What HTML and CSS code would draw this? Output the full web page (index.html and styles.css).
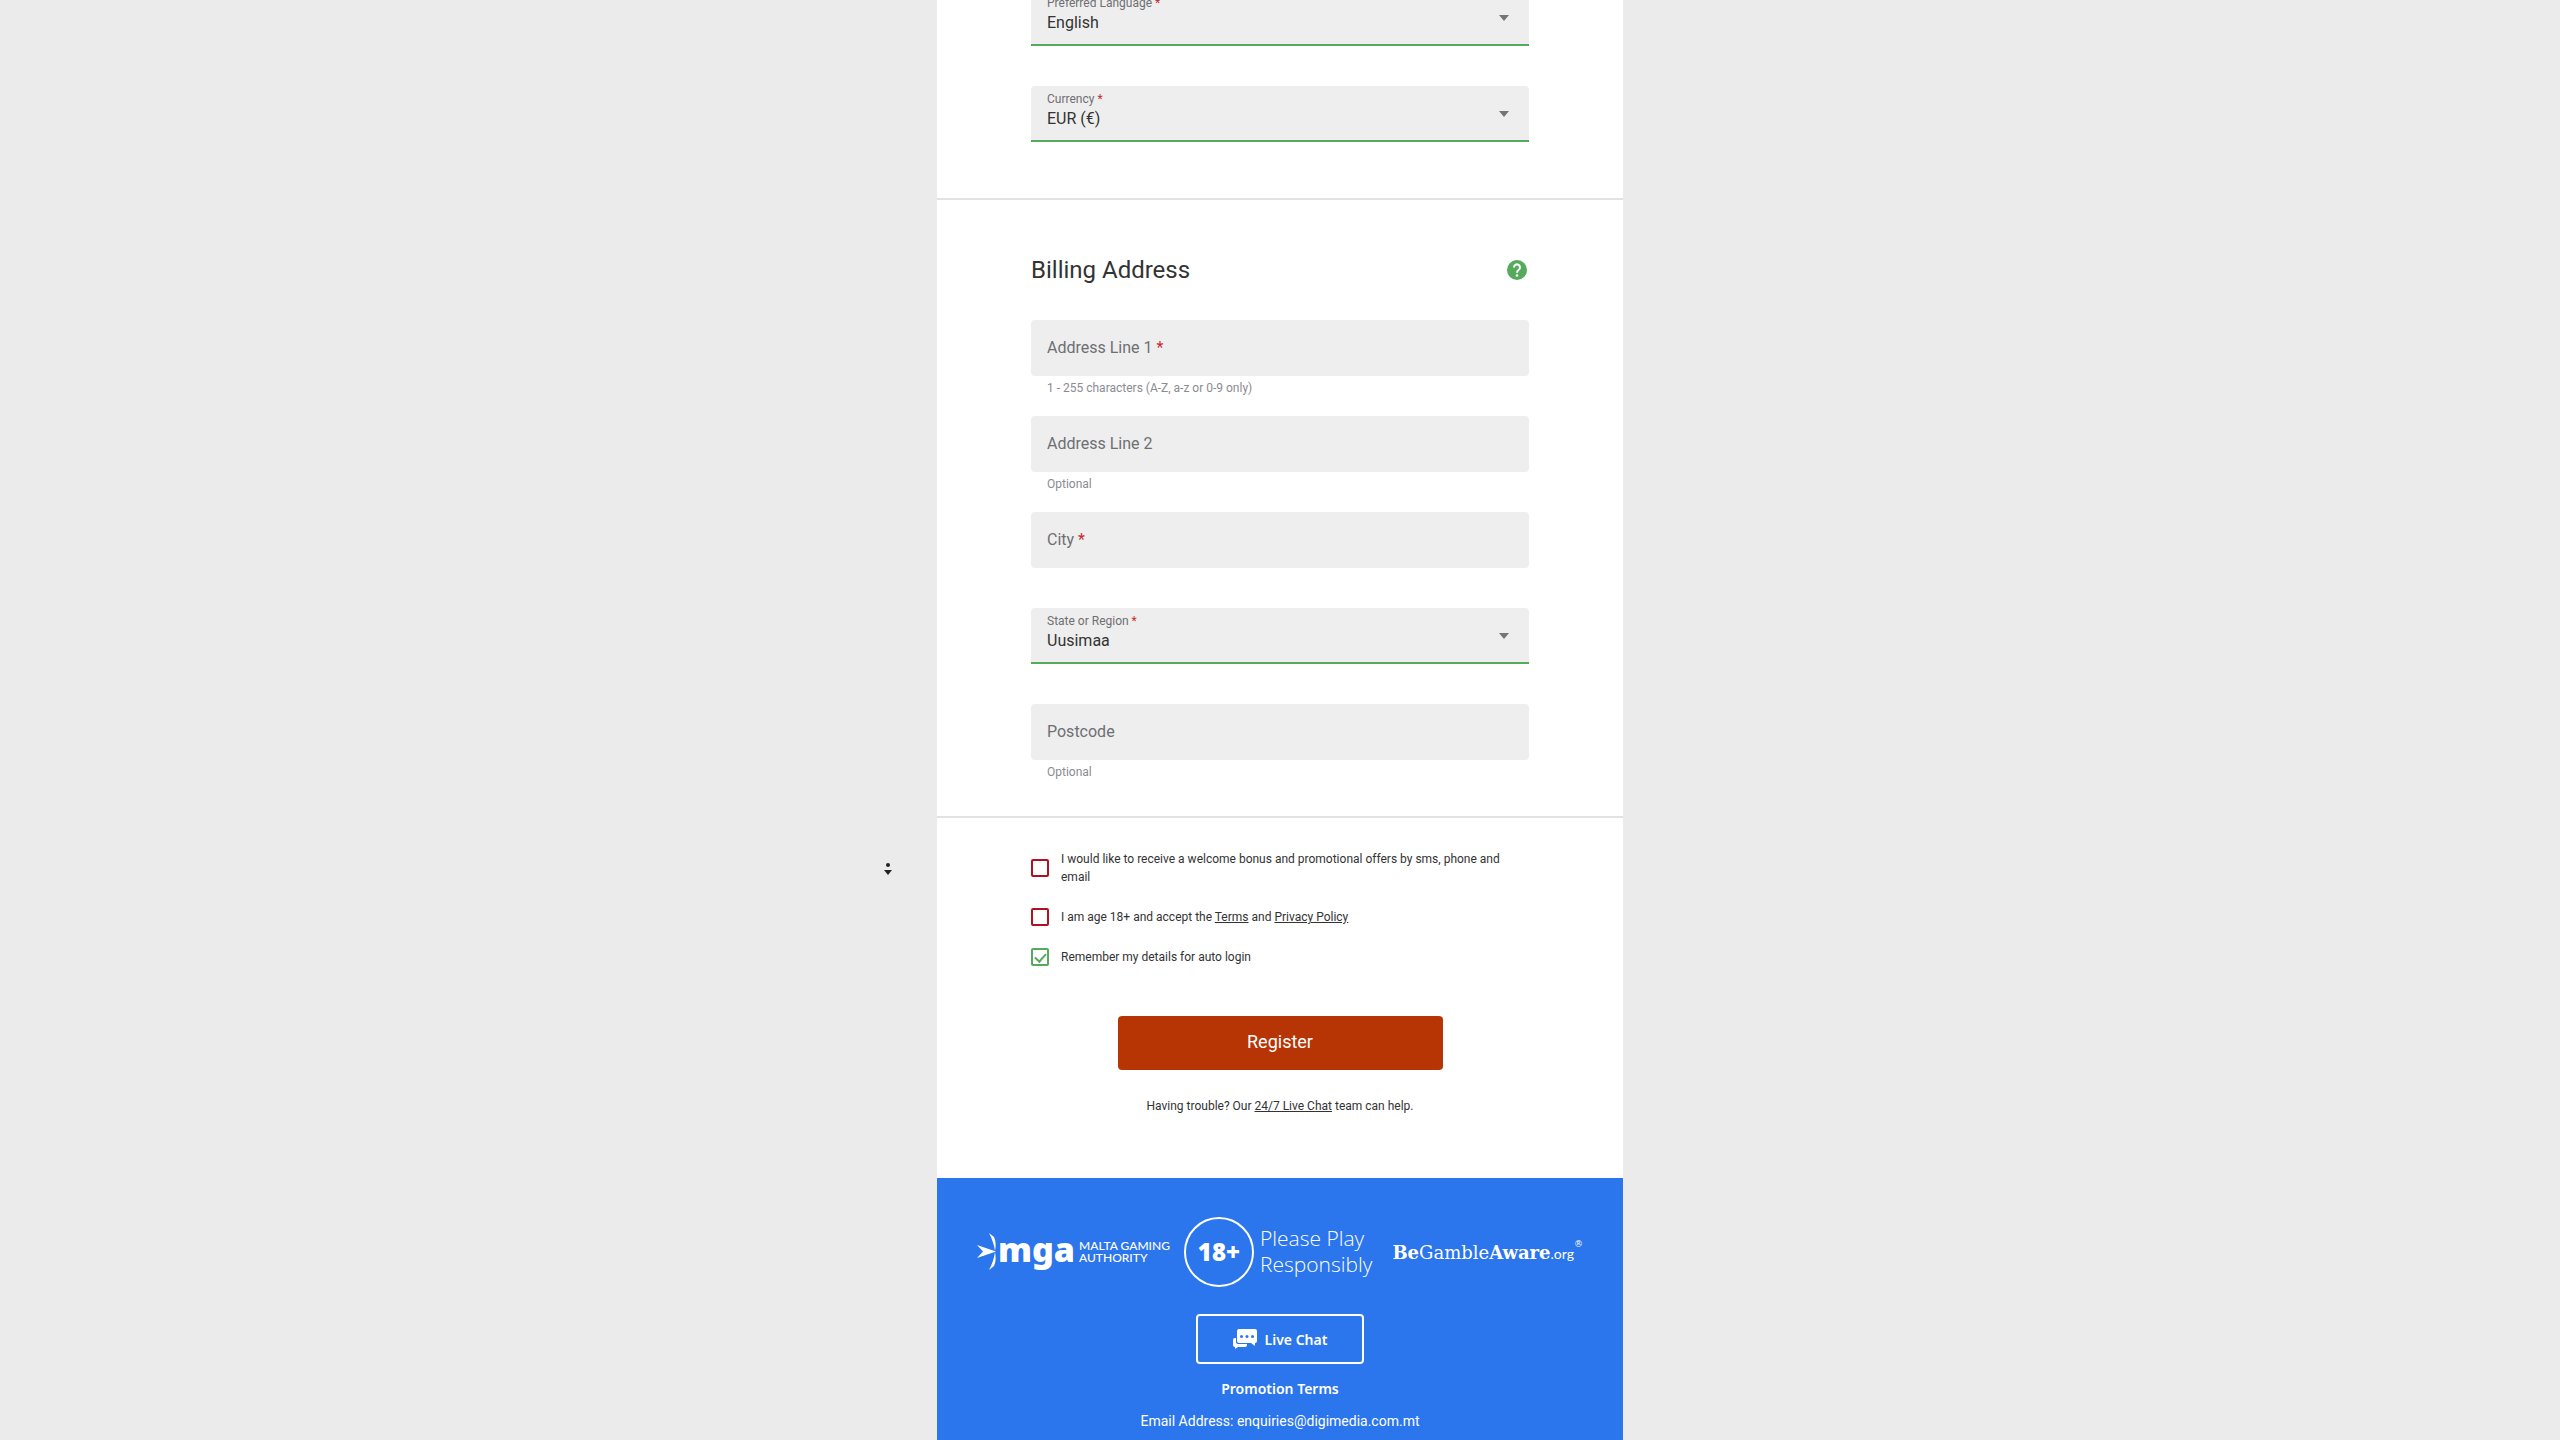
FILE: index.html
```html
<!DOCTYPE html>
<html lang="en">
<head>
  <meta charset="UTF-8" />
  <meta name="viewport" content="width=device-width, initial-scale=1" />
  <title>Register</title>
  <link rel="stylesheet" href="styles.css">
</head>
<body>
  <main class="card">
    <form class="form">
      <section class="section section-account">
        <div class="field field-select">
          <div class="box">
            <label for="language">Preferred Language <span class="req">*</span></label>
            <select id="language"><option>English</option></select>
          </div>
        </div>
        <div class="field field-select">
          <div class="box">
            <label for="currency">Currency <span class="req">*</span></label>
            <select id="currency"><option>EUR (€)</option></select>
          </div>
        </div>
      </section>

      <section class="section section-address">
        <div class="section-head">
          <h2>Billing Address</h2>
          <button type="button" class="help" aria-label="Help">
            <svg viewBox="2 2 20 20" width="20" height="20"><circle cx="12" cy="12" r="10" fill="#55aa5c"/><path d="M9 9.500a3 3 0 1 1 4.800 2.300c-1.200.9-1.800 1.400-1.800 2.900" fill="none" stroke="#fff" stroke-width="2"/><circle cx="12" cy="17.500" r="1.300" fill="#fff"/></svg>
          </button>
        </div>
        <div class="field">
          <div class="box">
            <label for="address1">Address Line 1 <span class="req">*</span></label>
            <input type="text" id="address1" />
          </div>
          <p class="hint">1 - 255 characters (A-Z, a-z or 0-9 only)</p>
        </div>
        <div class="field">
          <div class="box">
            <label for="address2">Address Line 2</label>
            <input type="text" id="address2" />
          </div>
          <p class="hint">Optional</p>
        </div>
        <div class="field">
          <div class="box">
            <label for="city">City <span class="req">*</span></label>
            <input type="text" id="city" />
          </div>
        </div>
        <div class="field field-select">
          <div class="box">
            <label for="region">State or Region <span class="req">*</span></label>
            <select id="region"><option>Uusimaa</option></select>
          </div>
        </div>
        <div class="field">
          <div class="box">
            <label for="postcode">Postcode</label>
            <input type="text" id="postcode" />
          </div>
          <p class="hint">Optional</p>
        </div>
      </section>

      <section class="section section-submit">
        <div class="check">
          <input type="checkbox" id="offers" />
          <label for="offers">I would like to receive a welcome bonus and promotional offers by sms, phone and email</label>
        </div>
        <div class="check">
          <input type="checkbox" id="age" />
          <label for="age">I am age 18+ and accept the <a href="#">Terms</a> and <a href="#">Privacy Policy</a></label>
        </div>
        <div class="check">
          <input type="checkbox" id="remember" checked />
          <label for="remember">Remember my details for auto login</label>
        </div>
        <button type="submit" class="register">Register</button>
        <p class="trouble">Having trouble? Our <a href="#">24/7 Live Chat</a> team can help.</p>
      </section>
    </form>

    <footer class="footer">
      <div class="logos">
        <a href="#" class="mga">
          <svg viewBox="0 0 20 38" width="20" height="38" fill="#fff"><path d="M0 12l19 6.500L0 25l6-6.500z"/><path d="M12 0l5 4c2 4 2 9 1 14C17 11 15 6 12 0zM12 37l5-4c2-4 2-9 1-14-1 7-3 12-6 18z"/></svg>
          <span class="mga-name">mga</span>
          <span class="mga-text">MALTA GAMING<br>AUTHORITY</span>
        </a>
        <div class="adult">
          <span class="adult-badge">18+</span>
          <span class="adult-text">Please Play<br>Responsibly</span>
        </div>
        <a href="#" class="aware"><b>Be</b>Gamble<b>Aware</b><small>.org</small><sup>®</sup></a>
      </div>
      <button type="button" class="live-chat">
        <svg viewBox="0 0 24 20" width="24" height="20"><path fill="#fff" d="M6 0h16a2 2 0 0 1 2 2v10a2 2 0 0 1-2 2v3l-4-3H6a2 2 0 0 1-2-2V2a2 2 0 0 1 2-2z"/><path fill="#fff" d="M2 9h1v4a2 2 0 0 0 2 2h9v1a2 2 0 0 1-2 2H5l-3 2v-2a2 2 0 0 1-2-2v-5a2 2 0 0 1 2-2z"/><g fill="#2b75ed"><circle cx="8.500" cy="7.500" r="1.500"/><circle cx="14" cy="7.500" r="1.500"/><circle cx="19.500" cy="7.500" r="1.500"/></g></svg>
        Live Chat
      </button>
      <a href="#" class="promo">Promotion Terms</a>
      <p class="email">Email Address: enquiries@digimedia.com.mt</p>
    </footer>
  </main>
  <svg class="scroll-mark" viewBox="0 0 8 12" width="8" height="12"><circle cx="4" cy="2" r="2"/><path d="M0 7h8l-4 5z"/></svg>
</body>
</html>
```

FILE: styles.css
```css
:root {
  --green: #55aa5c;
  --red: #b11021;
  --blue: #2b75ed;
  --field: #eee;
  --text: #333;
  --muted: #6e6e73;
}
* { box-sizing: border-box; margin: 0; padding: 0; }
body {
  font-family: Roboto, sans-serif;
  font-size: 12px;
  line-height: 18px;
  background: #ebebeb;
  color: var(--text);
  display: flex;
  justify-content: center;
  min-height: 100vh;
}
a { color: inherit; }
button, input, select { font-family: inherit; }
.card {
  width: 100%;
  max-width: 686px;
  background: #fff;
  display: flex;
  flex-direction: column;
}
/* page is scrolled a little past the first field */
.form { margin-top: -10px; }
.section { padding: 0 94px; }
.section-account,
.section-address { border-bottom: 2px solid #e3e3e3; }
.section-account { padding-bottom: 16px; }
.section-address { padding-top: 52px; padding-bottom: 16px; }

.section-head {
  display: flex;
  align-items: center;
  justify-content: space-between;
  height: 36px;
  margin-bottom: 32px;
  padding-right: 2px;
}
h2 { font-size: 24px; font-weight: 400; }
.help {
  display: flex;
  background: none;
  border: none;
  cursor: pointer;
}

.field { height: 96px; }
.box {
  position: relative;
  height: 56px;
  background: var(--field);
  border-radius: 4px;
}
.box label {
  position: absolute;
  top: 19px;
  left: 16px;
  font-size: 16px;
  color: var(--muted);
  pointer-events: none;
}
.box input,
.box select {
  width: 100%;
  height: 100%;
  padding: 10px 16px 0;
  border: none;
  background: none;
  font-size: 16px;
  color: var(--text);
  appearance: none;
  outline: none;
}
.req { color: #c62b2b; }
.hint { padding: 3px 16px; color: #8b8b92; }
.field-select .box {
  border-bottom: 2px solid var(--green);
  border-radius: 4px 4px 0 0;
}
.field-select .box label { top: 4px; font-size: 12px; }
.field-select .box::after {
  content: '';
  position: absolute;
  top: 25px;
  right: 20px;
  border: 5px solid transparent;
  border-top: 6px solid #757575;
  border-bottom: none;
  pointer-events: none;
}

.section-submit {
  display: flex;
  flex-direction: column;
  padding-top: 32px;
  padding-bottom: 63px;
}
.check {
  display: flex;
  align-items: center;
  gap: 12px;
  margin-bottom: 22px;
}
.check input {
  flex: none;
  position: relative;
  width: 18px;
  height: 18px;
  border: 2px solid var(--red);
  border-radius: 2px;
  appearance: none;
}
.check input:checked { border-color: var(--green); }
.check input:checked::after {
  content: '';
  position: absolute;
  top: 1px;
  left: 4px;
  width: 5px;
  height: 9px;
  border: solid var(--green);
  border-width: 0 2px 2px 0;
  transform: rotate(42deg);
}
.register {
  align-self: center;
  width: 325px;
  height: 54px;
  margin-top: 28px;
  padding-bottom: 3px;
  border: none;
  border-radius: 4px;
  background: #b73405;
  color: #fff;
  font-size: 18px;
  font-weight: 400;
  cursor: pointer;
}
.trouble { margin-top: 27px; text-align: center; }

.footer {
  flex: 1;
  display: flex;
  flex-direction: column;
  align-items: center;
  padding: 39px 40px 0;
  background: var(--blue);
  color: #fff;
}
.footer a { text-decoration: none; }
.logos {
  display: flex;
  align-items: center;
  justify-content: space-between;
  width: 100%;
  height: 70px;
  margin-bottom: 27px;
}
.mga { display: flex; align-items: center; }
.mga-name {
  margin: 0 4px 6px 1px;
  font-family: "Noto Sans", sans-serif;
  font-size: 34px;
  font-weight: 900;
  line-height: 34px;
}
.mga-text {
  font-family: Lato, sans-serif;
  font-size: 12px;
  font-weight: 500;
  line-height: 12px;
}
.adult {
  display: flex;
  align-items: center;
  gap: 6px;
  margin-right: 6px;
}
.adult-badge {
  display: flex;
  align-items: center;
  justify-content: center;
  width: 70px;
  height: 70px;
  border: 2px solid #fff;
  border-radius: 50%;
  font-family: "Noto Sans", sans-serif;
  font-size: 24px;
  font-weight: 900;
}
.adult-text {
  padding-bottom: 2px;
  font-family: "Open Sans", sans-serif;
  font-size: 21px;
  font-weight: 300;
  line-height: 26px;
}
.aware {
  padding-top: 2px;
  font-family: "DejaVu Serif", serif;
  font-size: 18px;
  white-space: nowrap;
}
.aware small { font-family: Lato, sans-serif; font-size: 14px; }
.aware sup { font-size: 9px; line-height: 0; vertical-align: 12px; }
.live-chat {
  display: flex;
  align-items: center;
  justify-content: center;
  gap: 8px;
  width: 168px;
  height: 50px;
  border: 2px solid #fff;
  border-radius: 4px;
  background: none;
  color: #fff;
  cursor: pointer;
}
.live-chat,
.promo {
  font-family: "Noto Sans", sans-serif;
  font-size: 14px;
  font-weight: 600;
}
.promo { margin-top: 16px; }
.email { margin-top: 14px; font-size: 14px; }

.scroll-mark {
  position: fixed;
  top: 863px;
  left: 884px;
  fill: #222;
}
```
